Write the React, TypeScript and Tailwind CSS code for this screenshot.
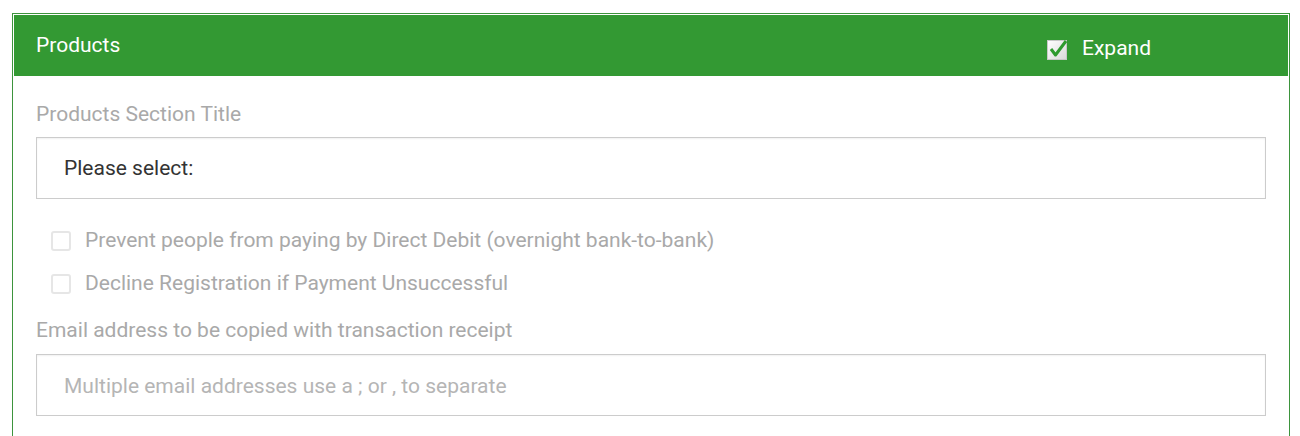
export default function App() {
  return (
    <div className="min-h-[436px] bg-white pt-[13px] pl-[12px] font-['Roboto',sans-serif]">
      <div className="w-[1278px] border border-[#3d943d] p-px pb-0">
        <div className="flex h-[61px] items-center justify-between bg-[#339933] pl-[22px] pr-[137px] text-white">
          <span className="text-[21px] leading-none">Products</span>
          <label className="flex items-center gap-[12px] pt-[6px]">
            <svg width="24" height="24" viewBox="0 0 24 24">
              <defs>
                <linearGradient id="cb" x1="0" y1="0" x2="1" y2="1">
                  <stop offset="0" stopColor="#ffffff" />
                  <stop offset="1" stopColor="#d9d9d9" />
                </linearGradient>
              </defs>
              <rect x="1.5" y="3.5" width="19" height="19" fill="url(#cb)" stroke="#c8c8c8" />
              <path d="M5 12 L9.5 18 L20 4" fill="none" stroke="#2f9a2f" strokeWidth="3" strokeLinejoin="round" />
            </svg>
            <span className="text-[21px] leading-none">Expand</span>
          </label>
        </div>
        <div className="flex flex-col px-[22px] pb-[20px]">
          <div className="mt-[25px] text-[21px] leading-[26px] text-[#a9a9a9]">Products Section Title</div>
          <div className="mt-[10px] flex h-[62px] items-center border border-[#cccccc] px-[27px] pt-[2px] text-[21px] text-[#333333] shadow-[inset_0_1px_2px_rgba(0,0,0,0.06)]">
            Please select:
          </div>
          <div className="mt-[32px] flex flex-col gap-[23px] pl-[15px]">
            {[
              "Prevent people from paying by Direct Debit (overnight bank-to-bank)",
              "Decline Registration if Payment Unsuccessful",
            ].map((t) => (
              <label key={t} className="flex h-[20px] items-center gap-[14px] text-[21px] text-[#a9a9a9]">
                <span className="h-[20px] w-[20px] shrink-0 rounded-[3px] border-2 border-[#e6e6e6] bg-white" />
                {t}
              </label>
            ))}
          </div>
          <div className="mt-[23px] text-[21px] leading-[26px] text-[#a9a9a9]">Email address to be copied with transaction receipt</div>
          <div className="mt-[11px] flex h-[62px] items-center border border-[#cccccc] px-[27px] pt-[3px] text-[21px] text-[#b5b5b5] shadow-[inset_0_1px_2px_rgba(0,0,0,0.06)]">
            Multiple email addresses use a ; or , to separate
          </div>
        </div>
      </div>
    </div>
  );
}
